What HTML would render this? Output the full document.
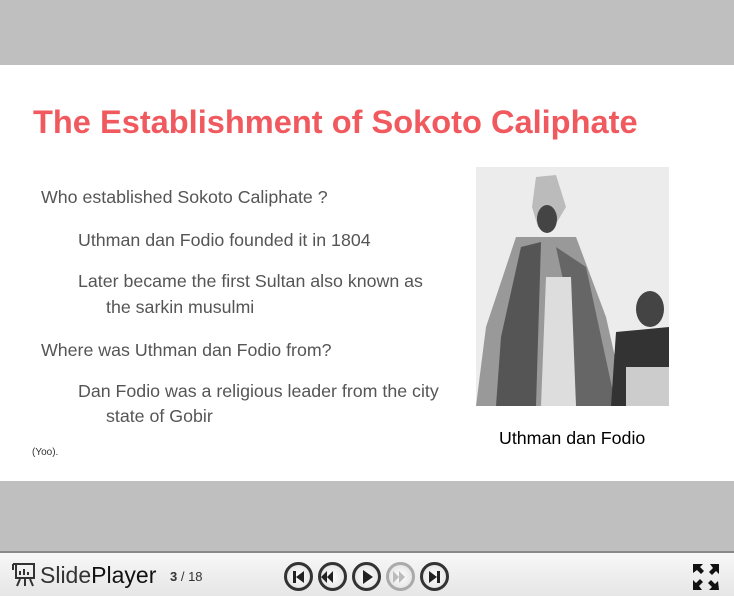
<!DOCTYPE html>
<html><head><meta charset="utf-8"><style>
*{margin:0;padding:0;box-sizing:border-box}
body{width:734px;height:596px;background:#bfbfbf;position:relative;overflow:hidden;font-family:"Liberation Sans",sans-serif}
.slide{position:absolute;left:0;top:65px;width:734px;height:416px;background:#fff}
h1{position:absolute;left:33px;top:103px;font-size:32.6px;color:#f05a5f;font-weight:bold;white-space:nowrap}
.t{position:absolute;font-size:17.8px;color:#555;white-space:nowrap}
.bar{position:absolute;left:0;top:551px;width:734px;height:45px;border-top:2px solid #888;background:linear-gradient(#f7f7f7,#e6e6e6)}
.btn{position:absolute;top:562px;width:29px;height:29px;border-radius:50%;border:3px solid #333;background:radial-gradient(#fff,#ddd)}
</style></head><body>
<div class="slide"></div>
<h1>The Establishment of Sokoto Caliphate</h1>
<div class="t" style="left:41px;top:187px">Who established Sokoto Caliphate ?</div>
<div class="t" style="left:78px;top:230px">Uthman dan Fodio founded it in 1804</div>
<div class="t" style="left:78px;top:271px">Later became the first Sultan also known as</div>
<div class="t" style="left:106px;top:297px">the sarkin musulmi</div>
<div class="t" style="left:41px;top:340px">Where was Uthman dan Fodio from?</div>
<div class="t" style="left:78px;top:381px">Dan Fodio was a religious leader from the city</div>
<div class="t" style="left:106px;top:406px">state of Gobir</div>
<div style="position:absolute;left:32px;top:447px;font-size:10px;color:#333">(Yoo).</div>
<div style="position:absolute;left:499px;top:428px;font-size:17.8px;color:#000">Uthman dan Fodio</div>
<svg style="position:absolute;left:476px;top:167px" width="193" height="239" viewBox="0 0 193 239">
<rect width="193" height="239" fill="#ececec"/>
<path d="M60 10 L80 8 L90 40 L78 60 L62 60 L56 40Z" fill="#bbb"/>
<ellipse cx="71" cy="52" rx="10" ry="14" fill="#444"/>
<path d="M40 70 L100 70 L130 150 L150 239 L0 239 L10 160Z" fill="#999"/>
<path d="M45 80 L65 75 L60 239 L20 239 L25 170Z" fill="#555"/>
<path d="M80 80 L110 100 L140 239 L100 239 L95 150Z" fill="#666"/>
<path d="M70 110 L95 110 L100 239 L65 239Z" fill="#ddd"/>
<ellipse cx="174" cy="142" rx="14" ry="18" fill="#444"/>
<path d="M140 165 L193 160 L193 239 L135 239Z" fill="#333"/>
<path d="M150 200 L193 200 L193 239 L150 239Z" fill="#ccc"/>
</svg>
<div class="bar"></div>
<svg style="position:absolute;left:11px;top:561px" width="26" height="26" viewBox="0 0 26 26" fill="none" stroke="#333" stroke-width="2"><rect x="5" y="3" width="18" height="14"/><path d="M2 3h4M2 3v6M9 14v-4M13 14v-6M17 14v-3M9 18l-3 7M19 18l3 7M14 18v7"/></svg>
<div style="position:absolute;left:40px;top:562px;font-size:23px;color:#333;white-space:nowrap">Slide<span style="color:#111">Player</span></div>
<div style="position:absolute;left:170px;top:569px;font-size:13px;color:#333"><b>3</b> / 18</div>
<div class="btn" style="left:284px"></div>
<div class="btn" style="left:318px"></div>
<div class="btn" style="left:352px"></div>
<div class="btn" style="left:386px;border-color:#aaa"></div>
<div class="btn" style="left:420px"></div>
<svg style="position:absolute;left:284px;top:562px" width="170" height="30">
<g fill="#222"><rect x="9" y="9" width="3" height="12"/><path d="M20 9v12l-8-6z"/>
<path d="M43 9v12l-6-6zM49 9v12l-6-6z"/>
<path d="M79 8v14l10-7z"/>
<path d="M109 9v12l6-6zM115 9v12l6-6z" fill="#bbb"/>
<path d="M145 9v12l8-6z"/><rect x="153" y="9" width="3" height="12"/></g>
</svg>
<svg style="position:absolute;left:693px;top:564px" width="26" height="26" viewBox="0 0 26 26" fill="#111"><path d="M0 0h10l-3 3 4 4-3 3-4-4-4 3zM26 0v10l-3-3-4 4-3-3 4-4-3-4zM0 26v-10l3 3 4-4 3 3-4 4 3 4zM26 26h-10l3-3-4-4 3-3 4 4 3-3z"/></svg>
</body></html>
